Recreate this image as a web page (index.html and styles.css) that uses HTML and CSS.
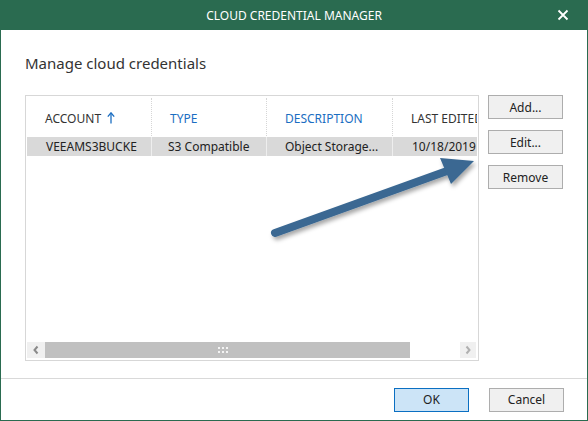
FILE: index.html
```html
<!DOCTYPE html>
<html>
<head>
<meta charset="utf-8">
<link rel="stylesheet" href="styles.css">
</head>
<body>
<div class="window">
  <div class="titlebar">
    <span class="title">CLOUD CREDENTIAL MANAGER</span>
    <span class="close">
      <svg width="12" height="12" viewBox="0 0 12 12"><path d="M1.5 1.5 L10.5 10.5 M10.5 1.5 L1.5 10.5" stroke="#fff" stroke-width="1.8" fill="none"/></svg>
    </span>
  </div>
  <div class="content">
    <h1 class="heading">Manage cloud credentials</h1>
    <div class="main">
      <div class="grid">
        <div class="grid-inner">
          <div class="hdr">
            <div class="cell c1 dark">ACCOUNT<svg class="sort" width="8" height="12" viewBox="0 0 8 12"><path d="M4 1 L4 11.5" stroke="#1b6ec2" stroke-width="1.3"/><path d="M0.8 4.6 L4 0.8 L7.2 4.6" stroke="#1b6ec2" stroke-width="1.3" fill="none"/></svg></div>
            <div class="cell c2">TYPE</div>
            <div class="cell c3">DESCRIPTION</div>
            <div class="cell c4 dark">LAST EDITED</div>
          </div>
          <div class="row sel">
            <div class="cell c1">VEEAMS3BUCKE</div>
            <div class="cell c2">S3 Compatible</div>
            <div class="cell c3">Object Storage...</div>
            <div class="cell c4">10/18/2019 3:25 PM</div>
          </div>
          <div class="spacer"></div>
          <div class="hscroll">
            <div class="sbtn">
              <svg width="8" height="10" viewBox="0 0 8 10"><path d="M5.5 1.5 L2.5 5 L5.5 8.5" stroke="#8a8a8a" stroke-width="2" fill="none"/></svg>
            </div>
            <div class="thumb">
              <svg width="12" height="6" viewBox="0 0 12 6"><g fill="#f4f4f4"><rect x="1" y="0" width="2" height="2"/><rect x="5" y="0" width="2" height="2"/><rect x="9" y="0" width="2" height="2"/><rect x="1" y="4" width="2" height="2"/><rect x="5" y="4" width="2" height="2"/><rect x="9" y="4" width="2" height="2"/></g></svg>
            </div>
            <div class="track"></div>
            <div class="sbtn right">
              <svg width="8" height="10" viewBox="0 0 8 10"><path d="M2.5 1.5 L5.5 5 L2.5 8.5" stroke="#b0b0b0" stroke-width="2" fill="none"/></svg>
            </div>
          </div>
        </div>
      </div>
      <div class="side">
        <button class="btn">Add...</button>
        <button class="btn">Edit...</button>
        <button class="btn">Remove</button>
      </div>
    </div>
  </div>
  <div class="footer">
    <button class="btn ok">OK</button>
    <button class="btn">Cancel</button>
  </div>
  <svg class="annot" width="588" height="421" viewBox="0 0 588 421">
    <defs>
      <filter id="sh" x="-20%" y="-50%" width="140%" height="200%">
        <feDropShadow dx="2" dy="3" stdDeviation="2" flood-color="#000" flood-opacity="0.35"/>
      </filter>
    </defs>
    <g filter="url(#sh)" fill="#3a6892">
      <path d="M275 233 L447 171" stroke="#3a6892" stroke-width="8" stroke-linecap="round" fill="none"/>
      <polygon points="474,161 440,158 451,184"/>
    </g>
  </svg>
</div>
</body>
</html>
```
FILE: styles.css
```css
* { box-sizing: border-box; }
html, body { margin: 0; padding: 0; }
body {
  font-family: "Noto Sans", "Open Sans", sans-serif;
  color: #222;
  background: #fff;
}
.window {
  position: relative;
  width: 588px;
  height: 421px;
  border: 1px solid #2a6b50;
  border-top: none;
  display: flex;
  flex-direction: column;
  overflow: hidden;
}
.titlebar {
  height: 30px;
  margin: 0 -1px;
  background: #2a6b50;
  color: #fff;
  display: flex;
  align-items: center;
  justify-content: center;
  position: relative;
}
.title {
  font-size: 12px;
  letter-spacing: 0;
}
.close {
  position: absolute;
  right: 19px;
  top: 9px;
  width: 12px;
  height: 12px;
  display: flex;
}
.content {
  padding: 22px 23px 0 24px;
  flex: 1;
  display: flex;
  flex-direction: column;
}
.heading {
  margin: 0 0 21px 0;
  font-size: 15px;
  font-weight: normal;
  color: #333;
  line-height: 22px;
}
.main {
  display: flex;
  gap: 9px;
}
.grid {
  width: 454px;
  height: 266px;
  border: 1px solid #d7d7d7;
  padding: 1px;
}
.grid-inner {
  height: 100%;
  display: flex;
  flex-direction: column;
  overflow: hidden;
}
.hdr, .row {
  display: flex;
  white-space: nowrap;
}
.hdr { height: 40px; }
.hdr .cell {
  color: #1b6ec2;
  font-size: 12px;
  border-right: 1px dotted #d6d6d6;
  margin: 1px 0 1px;
  padding-top: 3px;
  line-height: 35px;
  display: flex;
  align-items: center;
}
.hdr .cell.dark { color: #333; }
.hdr .cell.c4 { border-right: none; }
.sort { margin-left: 6px; margin-top: -2px; }
.cell {
  padding-left: 18px;
  overflow: hidden;
  flex: none;
  font-size: 12px;
}
.c1 { width: 125px; }
.c2 { width: 115px; }
.c3 { width: 126px; }
.c4 { width: 120px; }
.row.sel .cell {
  background: #d9d9d9;
  height: 19px;
  line-height: 19px;
  color: #222;
  border-right: 1px solid #eeeeee;
}
.row.sel .c1 { padding-left: 19px; }
.row.sel .c2 { padding-left: 16px; }
.row.sel .c4 { padding-left: 19px; }
.spacer { flex: 1; }
.hscroll {
  height: 16px;
  display: flex;
  margin-bottom: 1px;
}
.sbtn {
  width: 18px;
  background: #f0f0f0;
  display: flex;
  align-items: center;
  justify-content: center;
}
.sbtn.right { width: 16px; margin-right: 1px; }
.thumb {
  width: 365px;
  background: #c0c0c0;
  display: flex;
  align-items: center;
  justify-content: center;
  padding-right: 10px;
}
.track { flex: 1; background: #fff; }
.side {
  display: flex;
  flex-direction: column;
  gap: 11px;
}
.btn {
  width: 75px;
  height: 24px;
  background: #f0f0f0;
  border: 1px solid #adadad;
  font-family: "Noto Sans", "Open Sans", sans-serif;
  font-size: 12px;
  color: #222;
  padding: 0;
  margin: 0;
}
.footer {
  border-top: 1px solid #d9d9d9;
  height: 42px;
  display: flex;
  justify-content: flex-end;
  align-items: center;
  gap: 20px;
  padding-right: 23px;
  margin-top: 15px;
}
.btn.ok {
  background: #cce4f7;
  border-color: #0a6fc2;
}
.annot {
  position: absolute;
  left: -1px;
  top: 0;
  pointer-events: none;
}
```
